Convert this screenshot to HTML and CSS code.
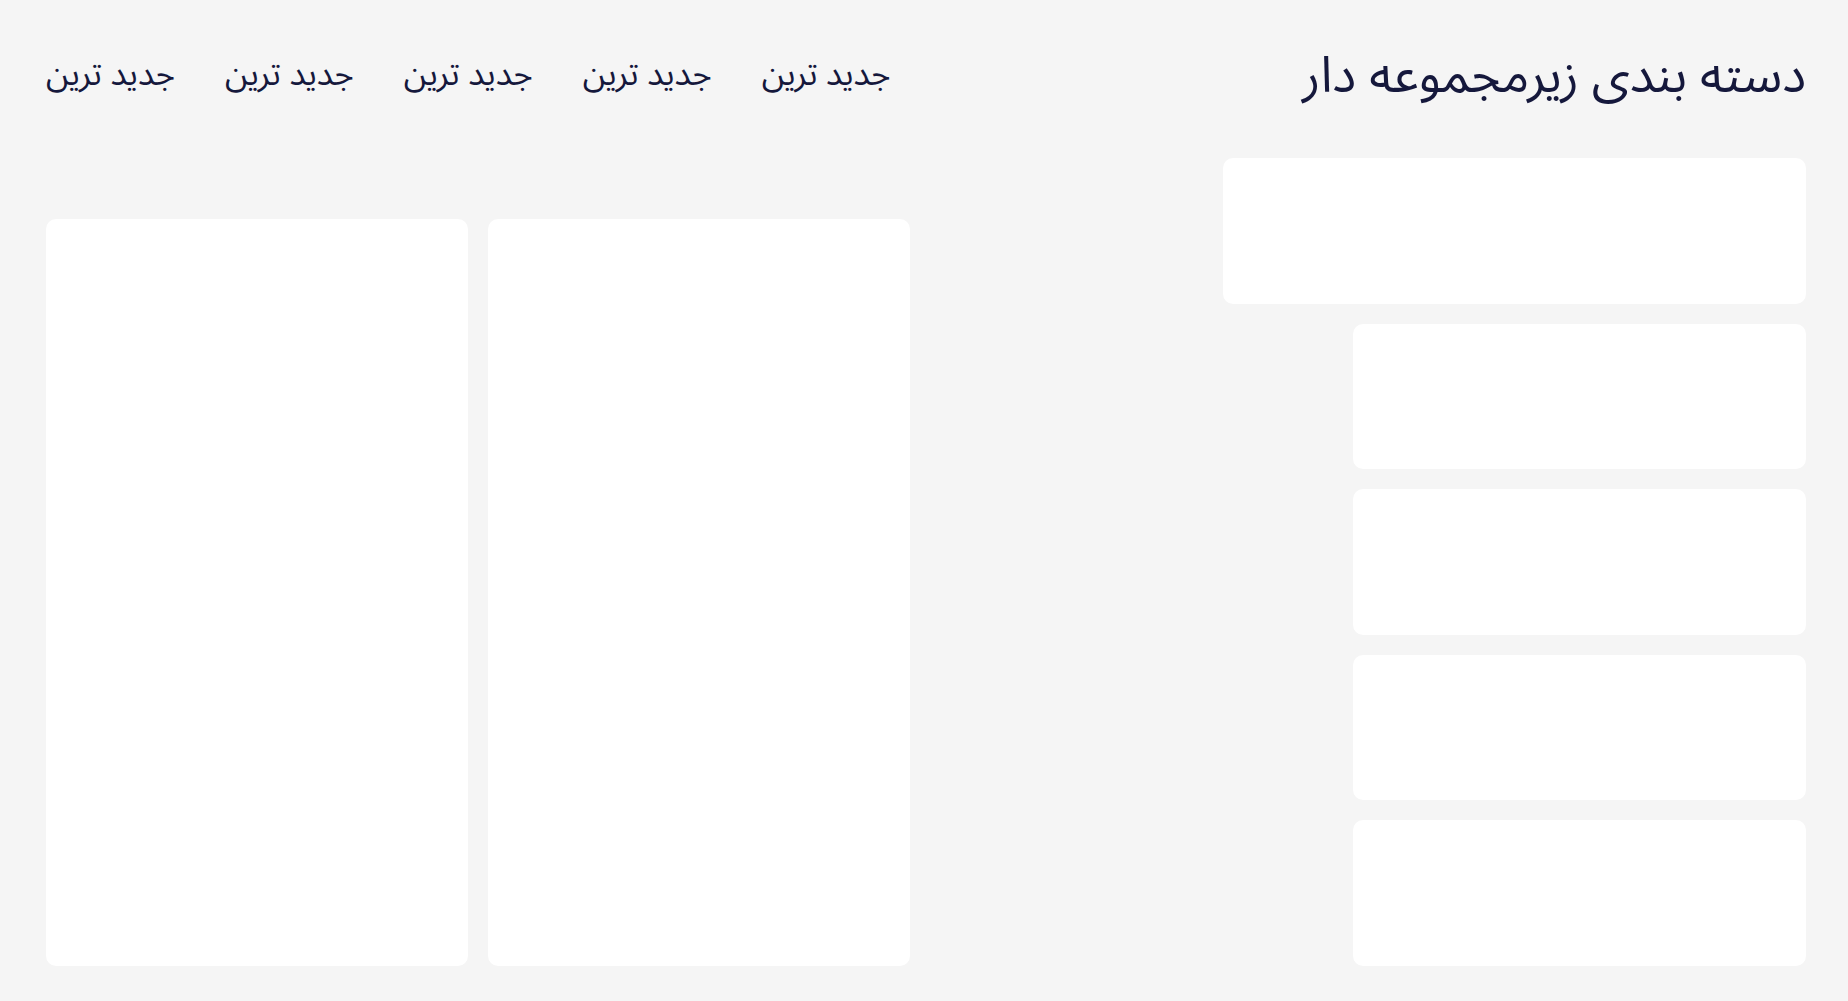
FILE: index.html
```html
<!DOCTYPE html>
<html lang="fa" dir="rtl">
<head>
<meta charset="utf-8">
<title>دسته بندی زیرمجموعه دار</title>
<link rel="stylesheet" href="styles.css">
</head>
<body>
<div class="page">
  <header class="header">
    <h1 class="title">دسته بندی زیرمجموعه دار</h1>
    <nav class="tabs">
      <a class="tab">جدید ترین</a>
      <a class="tab">جدید ترین</a>
      <a class="tab">جدید ترین</a>
      <a class="tab">جدید ترین</a>
      <a class="tab">جدید ترین</a>
    </nav>
  </header>
  <main class="main">
    <section class="side">
      <div class="card card-wide"></div>
      <div class="card card-narrow"></div>
      <div class="card card-narrow"></div>
      <div class="card card-narrow"></div>
      <div class="card card-narrow"></div>
    </section>
    <section class="columns">
      <div class="card col"></div>
      <div class="card col"></div>
    </section>
  </main>
</div>
</body>
</html>
```

FILE: styles.css
```css
* { box-sizing: border-box; }
html, body {
  margin: 0;
  padding: 0;
  background: #f5f5f5;
}
body {
  font-family: "Noto Sans Arabic", "DejaVu Sans", sans-serif;
  color: #15183c;
}
.page {
  padding: 0 42px 0 46px;
  height: 1001px;
  display: flex;
  flex-direction: column;
}
.header {
  height: 158px;
  display: flex;
  justify-content: space-between;
  align-items: flex-start;
  padding-top: 44px;
}
.title {
  margin: 0;
  font-size: 50px;
  font-weight: 400;
  line-height: 64px;
}
.tabs {
  display: flex;
  gap: 50px;
  padding-top: 10px;
}
.tab {
  font-size: 33px;
  line-height: 42px;
  cursor: pointer;
}
.main {
  display: flex;
  justify-content: space-between;
  align-items: flex-end;
}
.card {
  background: #ffffff;
  border-radius: 10px;
}
.side {
  width: 583px;
  height: 808px;
  display: grid;
  grid-template-rows: repeat(5, 1fr);
  row-gap: 20px;
  justify-items: start;
}
.card-wide { width: 583px; }
.card-narrow { width: 453px; }
.columns {
  display: flex;
  gap: 20px;
  height: 747px;
}
.col {
  width: 422px;
}
```
